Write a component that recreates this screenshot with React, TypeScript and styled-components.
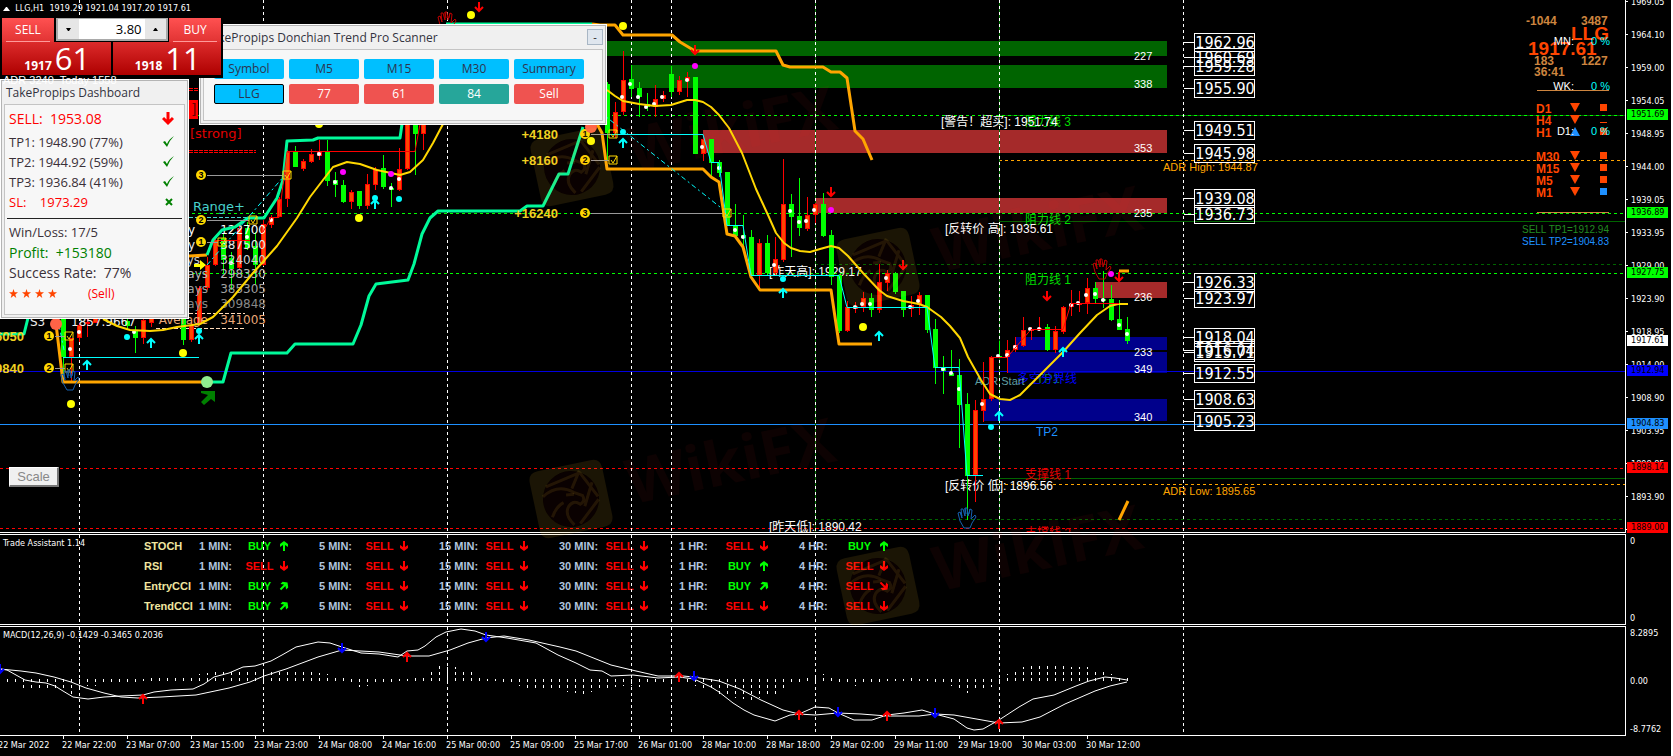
import React from "react";
import styled, { createGlobalStyle, css } from "styled-components";

const FONT_AXIS = `"DejaVu Sans Condensed", "DejaVu Sans", sans-serif`;
const FONT_ARIAL = `"Liberation Sans", "Noto Sans CJK SC", sans-serif`;
const FONT_WIDE = `"DejaVu Sans", sans-serif`;
const FONT_UI = `"Open Sans", "Noto Sans", sans-serif`;

const LIME = "#00ff00";
const DARK_GREEN = "#006400";
const RED = "#ff0000";
const ORANGE = "#ffa500";
const GOLD = "#ffd700";
const MINT = "#00fa9a";
const AQUA = "#00ffff";
const ORANGE_RED = "#ff4500";
const DODGER = "#1e90ff";
const PERU = "#cd853f";

const GlobalStyle = createGlobalStyle`
  * { box-sizing: border-box; }
  body { margin: 0; background: #000; overflow: hidden; }
  button, input { font: inherit; margin: 0; padding: 0; }
`;

/* ---------- frame ---------- */

const Terminal = styled.main`
  position: relative;
  display: flex;
  flex-direction: column;
  gap: 1px;
  min-height: 100vh;
  overflow: hidden;
  background: #000;
  color: #fff;
  border-right: 2px solid #fff;
  font-family: ${FONT_AXIS};
  font-size: 9px;
`;

const Pane = styled.section<{ $height: number }>`
  display: flex;
  height: ${(p) => p.$height}px;
`;

const Plot = styled.div<{ $first?: boolean }>`
  position: relative;
  flex: 1;
  min-width: 0;
  overflow: hidden;
  border: solid #fff;
  border-width: ${(p) => (p.$first ? "0 1px 1px 0" : "1px 1px 1px 0")};
`;

const Canvas = styled.svg`
  position: absolute;
  inset: 0;
  display: block;
  width: 100%;
  height: 100%;
`;

const PaneTitle = styled.h2`
  position: absolute;
  top: 2px;
  left: 3px;
  margin: 0;
  font-size: 9px;
  font-weight: 400;
  line-height: 13px;
  white-space: pre;
`;

/* ---------- value axis ---------- */

const Axis = styled.div<{ $spread?: boolean }>`
  position: relative;
  width: 45px;
  flex: none;
  overflow: hidden;
  display: flex;
  flex-direction: column;
  justify-content: ${(p) => (p.$spread ? "space-between" : "flex-start")};
  line-height: 14px;
`;

const ScaleList = styled.ul`
  list-style: none;
  margin: -15px 0 0;
  padding: 0;
`;

const ScaleItem = styled.li`
  display: flex;
  align-items: center;
  gap: 3px;
  height: 33px;
  &::before {
    content: "";
    width: 2px;
    height: 1px;
    background: #fff;
  }
`;

const AxisValue = styled.span`
  padding-left: 4px;
`;

const PriceTag = styled.span<{ $y: number; $bg: string }>`
  position: absolute;
  left: 1px;
  top: ${(p) => p.$y - 5}px;
  width: 41px;
  height: 11px;
  padding-left: 4px;
  line-height: 11px;
  background: ${(p) => p.$bg};
  color: #000;
`;

const TimeAxis = styled.ol`
  list-style: none;
  display: flex;
  margin: -1px 0 0 -2px;
  padding: 0;
  height: 20px;
`;

const TimeItem = styled.li`
  flex: none;
  width: 64px;
  line-height: 12px;
  white-space: nowrap;
  &::before {
    content: "";
    display: block;
    width: 1px;
    height: 3px;
    margin-left: 1px;
    background: #fff;
  }
`;

/* ---------- drawing text ---------- */

const Label = styled.text<{ $size?: number; $bold?: boolean; $font?: string }>`
  font-family: ${(p) => p.$font || FONT_ARIAL};
  font-size: ${(p) => p.$size || 12}px;
  font-weight: ${(p) => (p.$bold ? 700 : 400)};
  white-space: pre;
`;

/* ---------- one-click trading ---------- */

const TradePanel = styled.form`
  position: absolute;
  top: 18px;
  left: 0;
  width: 223px;
  padding: 0 2px 3px;
  background: #000;
  font-family: ${FONT_UI};
  color: #fff;
`;

const TradeTop = styled.div`
  display: flex;
  justify-content: space-between;
  height: 24px;
`;

const SideButton = styled.button`
  width: 52px;
  height: 24px;
  border: 0;
  padding: 0 4px;
  background: linear-gradient(#ff5151, #e13333);
  color: #fff;
  font-size: 12px;
  line-height: 22px;
  span {
    display: block;
    border-bottom: 1px solid #ff9a9a;
  }
`;

const Volume = styled.div`
  display: flex;
  width: 112px;
  height: 23px;
  border: 2px solid #a9a9a9;
  border-top-width: 1px;
  background: #fff;
  input {
    flex: 1;
    min-width: 0;
    border: 0;
    padding-right: 3px;
    text-align: right;
    font-size: 13px;
    color: #000;
    outline: 0;
  }
  button {
    width: 21px;
    border: 0;
    background: #e6e6e6;
    display: flex;
    align-items: center;
    justify-content: center;
  }
`;

const Quotes = styled.div`
  display: flex;
  gap: 2px;
`;

const Quote = styled.div`
  flex: 1;
  height: 33px;
  display: flex;
  justify-content: center;
  align-items: baseline;
  gap: 3px;
  padding-left: 2px;
  line-height: 32px;
  background: linear-gradient(#dc2b2b, #ae0000);
  b {
    font-size: 12px;
  }
  span {
    font-size: 31px;
  }
`;

/* ---------- floating windows ---------- */

const windowSkin = css`
  position: absolute;
  padding: 0 3px 3px;
  background: #f0f0f0;
  border: 1px solid #fff;
  outline: 1px solid #b4b4b4;
  outline-offset: -2px;
  color: #33333f;
  font-family: ${FONT_UI};
`;

const Dashboard = styled.aside`
  ${windowSkin};
  top: 79px;
  left: 0;
  width: 189px;
`;

const Scanner = styled.aside`
  ${windowSkin};
  top: 24px;
  left: 199px;
  width: 408px;
`;

const WindowTitle = styled.header`
  display: flex;
  justify-content: space-between;
  align-items: center;
  height: 24px;
  padding-left: 2px;
  h2 {
    margin: 0;
    font-size: 12px;
    font-weight: 400;
  }
`;

const Minimize = styled.button`
  width: 16px;
  height: 16px;
  border: 1px solid #a8b6c4;
  background: #dfe6ee;
  color: #222;
  font-size: 11px;
  line-height: 12px;
`;

const WindowBody = styled.div`
  background: #f7f7f7;
  border: 1px solid #c4c4c4;
`;

const ScanGrid = styled.div`
  display: grid;
  grid-template-columns: repeat(5, 70px);
  grid-auto-rows: 20px;
  gap: 5px;
  padding: 9px 10px 16px;
`;

const Cell = styled.button<{ $bg: string; $current?: boolean }>`
  border: ${(p) => (p.$current ? "1px solid #000" : "0")};
  border-radius: 2px;
  background: ${(p) => p.$bg};
  color: ${(p) => (p.$bg === "#00bfff" ? "#2c3550" : "#fff")};
  font-size: 12px;
  line-height: 18px;
`;

const DashBody = styled(WindowBody)`
  padding: 0 2px 10px;
`;

const DashRow = styled.div<{ $size?: number; $color?: string; $height?: number }>`
  display: flex;
  align-items: center;
  justify-content: space-between;
  height: ${(p) => p.$height || 20}px;
  padding: 0 8px 0 2px;
  font-size: ${(p) => p.$size || 13}px;
  color: ${(p) => p.$color || "#3a3038"};
  white-space: pre;
`;

const Divider = styled.hr`
  height: 1px;
  margin: 6px 0 3px;
  border: 0;
  background: #222;
`;

const Rating = styled.div`
  display: flex;
  align-items: center;
  gap: 31px;
  height: 22px;
  padding-left: 2px;
  font-size: 12px;
  color: ${RED};
`;

const Stars = styled.span`
  display: flex;
  gap: 4px;
`;

const ScaleButton = styled.button`
  position: absolute;
  top: 467px;
  left: 9px;
  width: 50px;
  height: 20px;
  border: solid;
  border-width: 1px 2px 2px 1px;
  border-color: #fff #777 #777 #fff;
  background: #f0f0f0;
  color: #888;
  font-family: ${FONT_ARIAL};
  font-size: 13px;
  line-height: 16px;
`;

/* ---------- trend summary at the right ---------- */

const Corner = styled.svg`
  position: absolute;
  top: 0;
  right: 14px;
  width: 90px;
  height: 250px;
`;

/* ---------- assistant ---------- */

const SignalTable = styled.table`
  position: relative;
  margin: 1px 0 0 144px;
  border-collapse: collapse;
  table-layout: fixed;
  width: 775px;
  font-family: ${FONT_ARIAL};
  font-size: 11px;
  font-weight: 700;
  text-align: left;
  white-space: nowrap;
  tr {
    height: 20px;
  }
  th,
  td {
    padding: 0;
  }
`;

const NameHead = styled.th`
  width: 55px;
  color: #f0e6a0;
`;

const Frame = styled.td`
  width: 46px;
  color: #b0c4de;
`;

const Signal = styled.td<{ $buy: boolean }>`
  width: 74px;
  color: ${(p) => (p.$buy ? LIME : RED)};
  span {
    display: flex;
    align-items: center;
    gap: 4px;
  }
  em {
    flex: none;
    width: 29px;
    font-style: normal;
    text-align: center;
  }
`;

const Watermark = styled.svg`
  position: absolute;
  top: 0;
  left: 0;
  width: 100%;
  height: 100%;
  pointer-events: none;
`;

/* ---------- data ---------- */

const DAY_LINES = [79, 263, 447, 631, 671, 815, 999, 1183];

type Candle = [number, number, number, number, number, 0 | 1];
// x, high, body top, body bottom, low, rising colour flag
const CANDLES: Candle[] = [
  [63, 318, 318, 357, 380, 1], [71, 338, 338, 357, 381, 0], [79, 323, 325, 338, 342, 0], [87, 318, 322, 324, 337, 0],
  [95, 316, 317, 323, 323, 0], [127, 318, 321, 326, 330, 1], [135, 326, 330, 338, 353, 1], [143, 318, 320, 338, 344, 0],
  [151, 316, 318, 323, 327, 0], [183, 318, 318, 340, 345, 1], [191, 320, 325, 340, 342, 0], [199, 286, 288, 323, 326, 0],
  [207, 257, 265, 288, 290, 0], [215, 238, 240, 265, 266, 0], [223, 233, 238, 260, 273, 1], [231, 252, 258, 269, 290, 1],
  [239, 226, 228, 268, 270, 0], [247, 222, 228, 248, 250, 1], [255, 232, 246, 265, 285, 1], [263, 220, 224, 265, 266, 0],
  [271, 215, 217, 225, 228, 0], [279, 197, 199, 217, 217, 0], [287, 150, 152, 199, 207, 0], [295, 146, 152, 167, 167, 1],
  [303, 159, 161, 169, 171, 0], [311, 149, 154, 162, 163, 0], [319, 140, 152, 156, 160, 0], [327, 140, 152, 181, 186, 1],
  [335, 172, 180, 185, 197, 1], [343, 180, 185, 202, 203, 1], [351, 190, 192, 202, 209, 0], [359, 191, 191, 206, 209, 1],
  [367, 174, 184, 206, 209, 0], [375, 167, 169, 185, 190, 0], [383, 155, 168, 187, 189, 1], [391, 183, 188, 190, 207, 1],
  [399, 148, 169, 190, 191, 0], [407, 110, 110, 169, 170, 0], [415, 110, 110, 134, 175, 1], [423, 110, 110, 134, 150, 0],
  [607, 82, 84, 133, 160, 1], [615, 102, 112, 133, 138, 0], [623, 51, 80, 112, 115, 0], [631, 65, 79, 89, 97, 1],
  [639, 82, 88, 97, 117, 1], [647, 93, 104, 107, 111, 1], [655, 85, 99, 107, 117, 0], [663, 91, 95, 99, 102, 0],
  [671, 66, 74, 92, 97, 1], [679, 76, 80, 92, 95, 0], [687, 72, 77, 81, 97, 0], [695, 77, 77, 154, 154, 1],
  [703, 137, 139, 154, 161, 0], [711, 139, 139, 163, 176, 1], [719, 160, 162, 173, 177, 1], [727, 172, 172, 225, 225, 1],
  [735, 204, 225, 236, 238, 1], [743, 215, 235, 238, 248, 1], [751, 230, 237, 276, 276, 1], [759, 239, 243, 275, 288, 0],
  [767, 235, 243, 273, 275, 1], [775, 237, 259, 273, 275, 0], [783, 159, 204, 260, 262, 0], [791, 194, 204, 217, 257, 1],
  [799, 178, 216, 228, 236, 1], [807, 197, 215, 229, 231, 0], [815, 203, 204, 215, 223, 0], [823, 193, 204, 236, 237, 1],
  [831, 230, 235, 277, 285, 1], [839, 274, 275, 331, 333, 1], [847, 301, 307, 331, 332, 0], [855, 302, 306, 309, 313, 0],
  [863, 292, 298, 307, 312, 0], [871, 293, 298, 310, 317, 1], [879, 264, 282, 310, 313, 0], [887, 270, 273, 283, 291, 0],
  [895, 272, 273, 292, 294, 1], [903, 291, 291, 310, 317, 1], [911, 296, 305, 309, 317, 0], [919, 292, 295, 305, 315, 0],
  [927, 295, 295, 330, 333, 1], [935, 319, 329, 368, 384, 1], [943, 356, 368, 371, 394, 1], [951, 350, 373, 376, 376, 1],
  [959, 359, 375, 405, 448, 1], [967, 393, 404, 476, 520, 1], [975, 400, 410, 475, 502, 0], [983, 362, 399, 411, 422, 0],
  [991, 356, 357, 399, 401, 0], [999, 341, 356, 358, 358, 1], [1007, 340, 350, 357, 373, 0], [1015, 337, 345, 350, 352, 0],
  [1023, 317, 330, 346, 347, 0], [1031, 327, 329, 331, 340, 0], [1039, 317, 328, 330, 331, 0], [1047, 324, 327, 350, 351, 1],
  [1055, 326, 331, 350, 353, 0], [1063, 306, 307, 332, 334, 0], [1071, 290, 304, 307, 316, 0], [1079, 291, 303, 305, 312, 0],
  [1087, 278, 288, 303, 314, 0], [1095, 282, 288, 299, 303, 1], [1103, 271, 299, 301, 308, 1], [1111, 285, 299, 320, 321, 1],
  [1119, 300, 319, 330, 330, 1], [1127, 317, 329, 341, 344, 1],
];

const PIVOTS: [number, number][] = [
  [622, 97], [630, 84], [638, 97], [646, 107], [654, 104], [662, 97], [687, 80], [702, 147], [719, 168], [735, 230],
  [743, 237], [774, 265], [790, 211], [799, 222], [806, 221], [814, 210], [855, 307], [862, 304], [870, 304], [886, 278],
  [910, 307], [918, 301], [1071, 305], [1078, 303], [1086, 295], [1095, 294], [1103, 300], [1119, 325], [1127, 334],
  [1030, 329], [1039, 329], [1015, 347], [1007, 355], [998, 356], [943, 369], [951, 373], [959, 389], [982, 404],
  [319, 154], [335, 182], [391, 188], [399, 179], [271, 220], [247, 237], [231, 263], [79, 332], [70, 349], [134, 332],
];

const ZONES: [number, number, number, string][] = [
  [600, 41, 15, DARK_GREEN], [631, 65, 23, DARK_GREEN], [703, 130, 23, "#a52a2a"], [815, 198, 15, "#a52a2a"],
  [1095, 282, 16, "#a52a2a"], [1015, 337, 13, "#00008b"], [1007, 352, 21, "#00008b"], [983, 399, 22, "#00008b"],
];

const ZONE_LABELS: [string, number][] = [
  ["227", 56], ["338", 84], ["353", 148], ["235", 213], ["236", 297], ["233", 352], ["349", 369], ["340", 417],
];

const LEVELS: [number, string, boolean, number][] = [
  // y, colour, dashed, start x
  [221, DARK_GREEN, false, 999], [264, DARK_GREEN, true, 815], [478, DARK_GREEN, false, 999], [519, DARK_GREEN, true, 815],
  [115, DARK_GREEN, false, 999], [115, LIME, true, 0], [213, LIME, true, 0], [273, LIME, true, 0],
  [160, ORANGE, true, 999], [484, ORANGE, true, 999], [371, "#0000e0", false, 0], [424, DODGER, false, 0],
  [468, RED, true, 0], [528, RED, true, 0],
];

const BOXED: [string, number][] = [
  ["1962.96", 42], ["1960.69", 57], ["1959.28", 66], ["1955.90", 88], ["1949.51", 130], ["1945.98", 153],
  ["1939.08", 198], ["1936.73", 214], ["1926.33", 282], ["1923.97", 298], ["1918.04", 337], ["1916.04", 350],
  ["1915.71", 352], ["1912.55", 373], ["1908.63", 399], ["1905.23", 421],
];

const NOTES: [string, number, number, string, number][] = [
  ["阻力线 3", 1025, 122, "#00dc00", 12], ["阻力线 2", 1025, 220, "#00dc00", 12], ["阻力线 1", 1025, 280, "#00dc00", 12],
  ["TP1", 1036, 379, "#0a7a50", 13], ["多空分界线", 1017, 379, "#0000ff", 12], ["TP2", 1036, 432, DODGER, 12],
  ["支撑线 1", 1025, 475, "#e00000", 12], ["支撑线 2", 1025, 533, "#e00000", 12],
  ["[警告！超买]: 1951.74", 941, 122, "#fff", 12], ["[反转价 高]: 1935.61", 945, 229, "#fff", 12],
  ["[昨天高]: 1929.17", 769, 272, "#fff", 12], ["[昨天低]: 1890.42", 769, 527, "#fff", 12],
  ["[反转价 低]: 1896.56", 945, 486, "#fff", 12], ["ADR Start", 975, 381, "#5f9ea0", 11],
  ["ADR High: 1944.87", 1163, 167, ORANGE, 11], ["ADR Low: 1895.65", 1163, 491, ORANGE, 11],
];

const PIPS: [string, number, number][] = [
  ["+4180", 558, 134], ["+8160", 558, 160], ["+16240", 558, 213], ["+6050", 24, 336], ["+9840", 24, 368],
];

const TARGETS: [number, number, number, number][] = [
  // badge digit, badge x, y, box x
  [3, 201, 175, 287], [2, 201, 220, 253], [1, 201, 242, 222], [1, 49, 336, 69], [2, 49, 368, 69],
  [1, 585, 134, 613], [2, 585, 160, 613], [3, 585, 213, 727],
];

const RANGES: [string, number, string, number, string][] = [
  ["Today", 195, "122700", 229, "#ffffff"], ["Yesterday", 195, "387500", 244, "#e8e8e8"],
  ["5 Days", 200, "324040", 259, "#d0d0d0"], ["10 Days", 208, "298330", 273, "#b8b8b8"],
  ["20 Days", 208, "385305", 288, "#a0a0a0"], ["50 Days", 208, "309848", 303, "#888888"],
  ["Average", 208, "341005", 319, "#e9a878"],
];

const DOTS: [number, number, number, string][] = [
  [623, 26, 4, "#ffff00"], [863, 327, 4, "#ffff00"], [471, 15, 4, "#ffff00"], [319, 124, 4, "#ffff00"],
  [359, 218, 4, "#ffff00"], [71, 404, 4, "#ffff00"], [183, 353, 4, "#ffff00"],
  [695, 66, 3, "#ff00ff"], [831, 210, 3, "#ff00ff"], [1111, 274, 3, "#ff00ff"], [343, 172, 3, "#ff00ff"], [391, 174, 3, "#ff00ff"],
  [623, 132, 3, AQUA], [783, 279, 3, AQUA], [991, 427, 3, AQUA], [127, 337, 3, AQUA], [199, 331, 3, AQUA],
  [399, 199, 3, AQUA], [375, 198, 3, AQUA], [591, 127, 6, "#ff6347"], [56, 324, 6, "#ff6347"], [207, 382, 6, "#90ee90"],
  [591, 141, 4, "#ffff00"],
];

const UP_ARROWS: [number, number][] = [
  [623, 143], [783, 293], [879, 336], [999, 416], [151, 343], [87, 365], [199, 339], [375, 204], [1063, 352],
];
const DOWN_ARROWS: [number, number][] = [
  [479, 7], [695, 50], [831, 192], [903, 265], [1047, 296], [1119, 277],
];

const AXIS_PRICES = [
  "1969.05", "1964.10", "1959.00", "1954.05", "1948.95", "1944.00", "1939.05", "1933.95", "1929.00",
  "1923.90", "1918.95", "1914.00", "1908.90", "1903.95", "1898.85", "1893.90", "1888.95",
];
const TAGS: [string, number, string][] = [
  ["1951.69", 114, LIME], ["1936.89", 212, LIME], ["1927.75", 272, LIME], ["1917.61", 340, "#fff"],
  ["1912.94", 370, "#0000ff"], ["1904.83", 423, DODGER], ["1898.14", 467, RED], ["1889.00", 527, RED],
];
const TIMES = [
  "22 Mar 2022", "22 Mar 22:00", "23 Mar 07:00", "23 Mar 15:00", "23 Mar 23:00", "24 Mar 08:00", "24 Mar 16:00",
  "25 Mar 00:00", "25 Mar 09:00", "25 Mar 17:00", "26 Mar 01:00", "28 Mar 10:00", "28 Mar 18:00", "29 Mar 02:00",
  "29 Mar 11:00", "29 Mar 19:00", "30 Mar 03:00", "30 Mar 12:00",
];

const FRAMES = ["1 MIN:", "5 MIN:", "15 MIN:", "30 MIN:", "1 HR:", "4 HR:"];
// B / S = buy / sell; the second letter is the arrow heading
const SIGNALS: [string, string[]][] = [
  ["STOCH", ["Bn", "Ss", "Ss", "Ss", "Ss", "Bn"]],
  ["RSI", ["Ss", "Ss", "Ss", "Ss", "Bn", "Ss"]],
  ["EntryCCI", ["Be", "Ss", "Ss", "Ss", "Be", "Sd"]],
  ["TrendCCI", ["Be", "Ss", "Ss", "Ss", "Ss", "Ss"]],
];
const HEADING: Record<string, number> = { n: 0, e: 45, d: 135, s: 180 };

const MACD_FAST =
  "0,42 7,43 16,48 25,53 36,55 46,56 55,59 63,64 73,70 88,72 104,70 121,69 143,68 154,65 171,63 193,62 204,57 214,50 229,46 243,40 255,39 271,34 282,28 296,20 318,15 330,16 342,20 361,26 379,27 398,30 407,24 418,23 425,19 436,10 446,5 461,2 475,4 486,8 507,11 536,16 558,28 576,36 590,43 602,44 611,49 633,48 658,51 679,50 694,52 711,60 719,65 733,76 744,83 754,88 775,94 790,88 799,87 815,80 829,81 838,86 854,93 872,93 887,88 904,86 922,83 935,87 954,92 967,101 974,103 983,102 999,93 1019,80 1033,72 1054,68 1076,59 1089,54 1105,50 1115,51 1127,53";
const MACD_SLOW =
  "0,42 21,44 36,46 54,50 71,55 86,61 104,66 121,70 138,71 161,70 196,68 229,61 250,55 264,49 286,42 318,30 342,23 379,25 407,29 429,29 450,23 468,16 486,11 504,9 529,13 560,20 576,24 611,38 636,44 658,49 683,49 694,50 719,54 740,62 761,73 783,83 799,87 815,88 838,86 861,87 887,89 919,89 935,87 954,88 999,96 1022,95 1040,90 1065,77 1095,64 1110,59 1127,55";
const HISTOGRAM: [number, number][] = [
  [7, -1], [24, -7], [56, -8], [72, -13], [80, -5], [95, -5], [110, -1], [140, -1], [150, 2], [190, 3], [204, 7],
  [220, 9], [250, 9], [285, 10], [310, 9], [330, 5], [345, 1], [360, -6], [375, -3], [405, 1], [425, 4], [438, 14],
  [455, 13], [470, 8], [487, 1], [510, -3], [525, -7], [555, -8], [583, -14], [600, -8], [623, -5], [640, -6],
  [663, -1], [690, -4], [730, -16], [750, -19], [775, -13], [790, -4], [810, 3], [823, 6], [840, -1], [855, -5],
  [880, -1], [910, 2], [935, -1], [955, -6], [967, -12], [985, -8], [1000, -2], [1007, 6], [1025, 14], [1040, 14],
  [1088, 13], [1103, 8], [1111, 6], [1127, 2],
];

const histogramBars = Array.from({ length: 141 }, (_, i) => {
  const x = 7 + i * 8;
  let k = 0;
  while (k < HISTOGRAM.length - 2 && HISTOGRAM[k + 1][0] < x) k++;
  const [x0, a] = HISTOGRAM[k];
  const [x1, b] = HISTOGRAM[k + 1];
  return [x, Math.round(a + ((b - a) * (x - x0)) / (x1 - x0))];
});

/* ---------- small drawings ---------- */

function Arrow({ x, y, color, turn = 0 }: { x: number; y: number; color: string; turn?: number }) {
  return (
    <path
      d="M0,-3 V5 M-4,0 L0,-4 L4,0"
      transform={`translate(${x} ${y}) rotate(${turn})`}
      fill="none"
      stroke={color}
      strokeWidth="2"
    />
  );
}

function SignalArrow({ color, turn }: { color: string; turn: number }) {
  return (
    <path
      d="M-1,5 V-1 L-4,1 V-2 L0,-5 L4,-2 V1 L1,-1 V5 Z"
      transform={`rotate(${turn})`}
      fill={color}
    />
  );
}

function MacdArrow({ x, y, color, turn = 0 }: { x: number; y: number; color: string; turn?: number }) {
  return (
    <path
      d="M0,5 V-4 M-4,0 L0,-4 L4,0"
      transform={`translate(${x} ${y}) rotate(${turn})`}
      fill="none"
      stroke={color}
      strokeWidth="2"
    />
  );
}

function Hand({ x, y, color }: { x: number; y: number; color: string }) {
  return (
    <path
      transform={`translate(${x} ${y})`}
      d="M-3,10 L-7,3 L-9,-5 L-7,-6 L-5,0 L-6,-9 L-4,-9 L-2,-2 L-2,-10 L0,-10 L1,-2 L3,-9 L5,-8 L4,1 L8,-3 L9,-1 L5,5 L3,10 Z M-7,-6 L-5,-2 M-2,-10 L-1,-4 M3,-9 L2,-4"
      fill="none"
      stroke={color}
      strokeWidth="1"
    />
  );
}

function DayLines() {
  return (
    <g stroke="#fff" strokeDasharray="3 3" shapeRendering="crispEdges">
      {DAY_LINES.map((x) => (
        <line key={x} x1={x + 0.5} x2={x + 0.5} y1="0" y2="100%" />
      ))}
    </g>
  );
}

function WikiMark({ x, y }: { x: number; y: number }) {
  return (
    <g transform={`translate(${x} ${y}) rotate(-12)`}>
      <path
        fillRule="evenodd"
        d="M-27,-34 H27 Q37,-34 37,-24 V24 Q37,34 27,34 H-27 Q-37,34 -37,24 V-24 Q-37,-34 -27,-34 Z M0,-28 A28,28 0 1 0 0,28 A28,28 0 1 0 0,-28 Z"
        fill="#f5c030"
        fillOpacity="0.11"
      />
      <circle r="28" fill="#ff2020" fillOpacity="0.04" />
      <g fill="none" stroke="#f5c030" strokeOpacity="0.11" strokeWidth="3">
        <path d="M-22,-17 L14,-24 M14,-26 L3,-10 M14,-24 L27,3 M24,-12 L12,10 M27,6 L4,26" />
        <path d="M-27,-8 Q-10,-18 4,-6 L12,-1 Q14,5 8,7 Q2,1 -4,7 Q-10,14 -2,26" />
        <path d="M-22,14 Q-16,4 -8,2 M-4,-5 L4,-4" />
      </g>
      <Label x="58" y="18" $font={FONT_UI} $size={62} $bold fill="#ff2020" fillOpacity="0.05">
        WikiFX
      </Label>
    </g>
  );
}

function PriceChart() {
  return (
    <Canvas role="img" aria-label="LLG H1 price chart">
      {ZONES.map(([x, y, h, c]) => (
        <rect key={y} x={x} y={y} width={1167 - x} height={h} fill={c} />
      ))}
      <g shapeRendering="crispEdges">
        {LEVELS.map(([y, c, dashed, x], i) => (
          <line key={i} x1={x} x2="100%" y1={y + 0.5} y2={y + 0.5} stroke={c} strokeDasharray={dashed ? "3 3" : undefined} />
        ))}
        <path d="M815.5,0 V532 M999.5,0 V532" stroke="#007000" />
      </g>
      <DayLines />

      {ZONE_LABELS.map(([t, y]) => (
        <Label key={t} x="1134" y={y + 4} $size={11} fill="#fff">{t}</Label>
      ))}
      {NOTES.map(([t, x, y, c, s]) => (
        <Label key={t} x={x} y={y + 4} $size={s} fill={c}>{t}</Label>
      ))}

      <g shapeRendering="crispEdges">
        <path d="M189,88.5 H199 M189,90.5 H199 M189,150.5 H256 M189,152.5 H256" stroke={RED} strokeDasharray="4 1" />
        <rect x="189" y="100" width="9" height="19" fill={RED} />
        <path d="M189,217.5 H247" stroke="#48d1cc" strokeDasharray="4 2" />
        <path d="M189,313.5 H245 M156,328.5 H245" stroke="#ffdab9" strokeDasharray="4 2" />
      </g>
      <Label x="191" y="114" $size={14} $font={FONT_WIDE} fill="#600">]</Label>
      <Label x="190" y="138" $size={13} $font={FONT_WIDE} fill="#e00000">[strong]</Label>
      <Label x="245" y="211" $size={13} $font={FONT_WIDE} fill="#48d1cc" textAnchor="end">Daily Range+</Label>

      <g shapeRendering="crispEdges">
        {CANDLES.map(([x, hi, top, bottom, lo, up]) => (
          <g key={x} fill={up ? LIME : ORANGE_RED} stroke={up ? LIME : RED}>
            <line x1={x + 0.5} x2={x + 0.5} y1={hi} y2={lo} />
            <rect x={x - 1.5} y={top + 0.5} width="4" height={Math.max(bottom - top - 1, 1)} />
          </g>
        ))}
      </g>
      {PIVOTS.map(([x, y]) => (
        <circle key={`${x}-${y}`} cx={x} cy={y} r="2" fill="#fff" />
      ))}
      {RANGES.map(([name, right, value, y, c]) => (
        <g key={value} fill={c}>
          <Label x={right} y={y + 5} $font={FONT_WIDE} textAnchor="end">{name}</Label>
          <Label x="266" y={y + 5} $font={FONT_WIDE} textAnchor="end">{value}</Label>
        </g>
      ))}
      <Label x="30" y="326" $font={FONT_WIDE} fill="#eee">S3</Label>
      <Label x="71" y="326" $font={FONT_WIDE} fill="#eee">1857.9667</Label>

      <g fill="none" strokeLinejoin="round">
        <polyline stroke={GOLD} strokeWidth="2" points="103,319 117,326 130,330 150,331 163,330 177,327 200,324 213,317 233,297 253,273 277,246 297,218 310,197 323,180 333,167 347,162 360,164 377,170 400,175 410,172 423,160 433,143 443,124" />
        <polyline stroke={GOLD} strokeWidth="2" points="607,90 615,96 623,101 639,104 655,106 671,105 687,100 695,100 703,102 711,107 719,115 729,128 742,153 756,189 768,215 776,233 784,243 791,248 800,251 810,252 820,249 831,246 839,248 848,256 863,273 879,290 887,296 903,301 919,304 927,307 941,317 950,326 960,338 968,357 981,380 990,394 1000,399 1010,400 1020,395 1030,385 1047,368 1063,352 1080,333 1097,315 1110,306 1118,304 1128,304" />
        <g stroke={ORANGE} strokeWidth="3">
          <polyline points="592,24 600,25 615,25 623,35 672,35 680,42 695,51 776,51 783,65 790,67 823,67 831,72 840,72 847,78 855,131 863,139 872,160" />
          <polyline points="597,124 602,133 607,169 703,169 711,177 719,182 727,234 735,236 743,247 751,277 760,290 831,290 839,344 872,344" />
          <polyline points="56,324 63,382 207,382" />
          <polyline points="189,256 207,255" />
          <path d="M1119,520 L1128,501 M1119,271 H1129" />
        </g>
        <g stroke={MINT} strokeWidth="3">
          <polyline points="0,334 24,334 28,318" />
          <polyline points="207,382 223,382 231,353 287,353 295,344 353,344 361,325 369,296 376,284 408,280 414,264 422,234 430,218 438,211 520,211 527,206 543,206 559,174 568,174 583,127" />
          <polyline points="207,255 213,240 222,230 235,227 248,218 264,218 277,198 283,180 287,141 313,140 318,138 400,138 402,124" />
          <path d="M446,24 H592" />
        </g>
        <g stroke={AQUA} strokeWidth="1">
          <polyline points="600,134.5 703,134.5 711,162.5 719,162.5 727,225.5 743,225.5 751,275.5 839,275.5 847,307.5 927,307.5 935,367.5 959,367.5 967,475.5 983,475.5" />
          <path d="M63,357.5 H199" />
          <path d="M600,112 L720,207 M207,265 L285,175 M58,320 L64,350" strokeDasharray="5 3 2 3" />
        </g>
        <g stroke={RED}>
          <polyline points="991,357.5 1007,357.5 1031,329.5 1063,329.5 1071,303.5 1119,303.5" />
          <path d="M215,240.5 H250 M263,232 L271,217.5 H279 L287,151.5 H415 L420,124" />
        </g>
      </g>

      {TARGETS.map(([n, x, y, bx]) => (
        <g key={`${x}-${y}`}>
          <line x1={x + 6} x2={bx - 4} y1={y + 0.5} y2={y + 0.5} stroke="#999" />
          <circle cx={x} cy={y} r="5" fill={GOLD} />
          <Label x={x} y={y + 3} $size={9} $bold textAnchor="middle" fill="#000">{n}</Label>
          <path d={`M${bx - 4},${y - 4} h8 v8 h-8 z M${bx - 2},${y} l2,3 l4,-7`} fill="none" stroke={GOLD} />
        </g>
      ))}
      {PIPS.map(([t, x, y]) => (
        <Label key={t} x={x} y={y + 5} $size={13} $bold textAnchor="end" fill="#f0d020">{t}</Label>
      ))}

      {DOTS.map(([x, y, r, c]) => (
        <circle key={`${x}-${y}`} cx={x} cy={y} r={r} fill={c} />
      ))}
      {UP_ARROWS.map(([x, y]) => (
        <Arrow key={`${x}-${y}`} x={x} y={y} color={AQUA} />
      ))}
      {DOWN_ARROWS.map(([x, y]) => (
        <Arrow key={`${x}-${y}`} x={x} y={y} color={RED} turn={180} />
      ))}
      <path d="M194,264 H200 V260 L206,265 L200,270 V267 H194 Z" fill="#ffff00" />
      <path d="M201,393 V391 H215 V402 L211,399 L204,405 L201,402 L208,395 Z" fill="#008000" />
      <Hand x={1102} y={269} color="#c00000" />
      <Hand x={967} y={518} color="#1560b0" />
      <Hand x={70} y={380} color="#1560b0" />
      <Hand x={447} y={22} color="#c00000" />

      {BOXED.map(([t, y]) => (
        <g key={t}>
          <path d={`M1184,${y + 0.5} H1194 M1194.5,${y - 8.5} h60 v18 h-60 z`} fill="none" stroke="#fff" shapeRendering="crispEdges" />
          <Label x="1225" y={y + 6} $font={FONT_AXIS} $size={16} textAnchor="middle" fill="#fff">{t}</Label>
        </g>
      ))}
    </Canvas>
  );
}

const TRENDS: [string, number, boolean, string][] = [
  // frame, y, falling, square colour
  ["D1", 108, true, ORANGE_RED], ["H4", 120, true, "none"], ["H1", 132, false, ORANGE_RED], ["M30", 156, true, ORANGE_RED],
  ["M15", 168, true, ORANGE_RED], ["M5", 180, true, ORANGE_RED], ["M1", 192, true, DODGER],
];

function CornerInfo() {
  return (
    <Corner viewBox="0 0 90 250" role="img" aria-label="Trend summary">
      <g fill={PERU}>
        <Label x="5" y="25" $bold $size={12}>-1044</Label>
        <Label x="60" y="25" $bold $size={12}>3487</Label>
        <Label x="13" y="65" $bold $size={12}>183</Label>
        <Label x="60" y="65" $bold $size={12}>1227</Label>
        <Label x="13" y="76" $bold $size={12}>36:41</Label>
        <rect x="16" y="90" width="72" height="1" />
        <rect x="16" y="212" width="72" height="1" />
      </g>
      <g fill={ORANGE_RED}>
        <Label x="50" y="40" $bold $size={19}>LLG</Label>
        <Label x="7" y="55" $bold $size={19}>1917.61</Label>
      </g>
      {TRENDS.map(([name, y, falling, square]) => (
        <g key={name}>
          <Label x="15" y={y + 5} $bold $size={12} fill={ORANGE_RED}>{name}</Label>
          <path
            d={falling ? `M49,${y - 5} h10 l-5,9 z` : `M49,${y + 4} h10 l-5,-9 z`}
            fill={falling ? ORANGE_RED : DODGER}
          />
          {square === "none" ? (
            <rect x="79" y={y + 2} width="7" height="1" fill={ORANGE_RED} />
          ) : (
            <rect x="79" y={y - 4} width="7" height="7" fill={square} />
          )}
        </g>
      ))}
      {([["MN:", 45], ["WK:", 90], ["D1:", 135]] as [string, number][]).map(([t, y]) => (
        <g key={t}>
          <Label x="53" y={y} textAnchor="end" $size={11} fill="#fff">{t}</Label>
          <Label x="89" y={y} textAnchor="end" $size={11} fill={AQUA}>0 %</Label>
        </g>
      ))}
      <Label x="88" y="233" textAnchor="end" $size={10} fill="#228b22">SELL TP1=1912.94</Label>
      <Label x="88" y="245" textAnchor="end" $size={10} fill={DODGER}>SELL TP2=1904.83</Label>
    </Corner>
  );
}

function Check() {
  return (
    <svg width="11" height="12" viewBox="0 0 11 12" aria-label="hit">
      <path d="M0,6 L2,5 L4,8 Q6,3 11,0 Q6,5 4,11 Z" fill="#008000" />
    </svg>
  );
}

function Star() {
  return (
    <svg width="9" height="9" viewBox="0 0 10 10" aria-hidden="true">
      <path d="M5,0 L6.2,3.7 H10 L7,6 L8.1,10 L5,7.6 L1.9,10 L3,6 L0,3.7 H3.8 Z" fill={ORANGE_RED} />
    </svg>
  );
}

const SCAN: [string, string][] = [
  ["Symbol", "#00bfff"], ["M5", "#00bfff"], ["M15", "#00bfff"], ["M30", "#00bfff"], ["Summary", "#00bfff"],
  ["LLG", "#00bfff"], ["77", "#ef5350"], ["61", "#ef5350"], ["84", "#26a69a"], ["Sell", "#ef5350"],
];

export default function App() {
  return (
    <>
      <GlobalStyle />
      <Terminal>
        <Pane $height={533}>
          <Plot $first>
            <PriceChart />
            <CornerInfo />
            <PaneTitle as="h1">
              <svg width="7" height="4" viewBox="0 0 7 4" aria-hidden="true">
                <path d="M0,4 L3,0 H4 L7,4 Z" fill="#fff" />
              </svg>
              {"  LLG,H1  1919.29 1921.04 1917.20 1917.61"}
            </PaneTitle>

            <Scanner>
              <WindowTitle>
                <h2>TakePropips Donchian Trend Pro Scanner</h2>
                <Minimize type="button" aria-label="Minimize">-</Minimize>
              </WindowTitle>
              <WindowBody>
                <ScanGrid>
                  {SCAN.map(([t, bg]) => (
                    <Cell key={t} type="button" $bg={bg} $current={t === "LLG"}>{t}</Cell>
                  ))}
                </ScanGrid>
              </WindowBody>
            </Scanner>

            <Dashboard>
              <WindowTitle>
                <h2>TakePropips Dashboard</h2>
              </WindowTitle>
              <DashBody>
                <DashRow $size={14} $color={RED} $height={27}>
                  SELL:  1953.08
                  <svg width="12" height="14" viewBox="0 0 12 14" aria-hidden="true">
                    <path d="M6,0 V11 M1,6 L6,11 L11,6" fill="none" stroke={RED} strokeWidth="3" />
                  </svg>
                </DashRow>
                <DashRow>TP1: 1948.90 (77%)<Check /></DashRow>
                <DashRow>TP2: 1944.92 (59%)<Check /></DashRow>
                <DashRow>TP3: 1936.84 (41%)<Check /></DashRow>
                <DashRow $color={RED}>
                  SL:    1973.29
                  <svg width="10" height="8" viewBox="0 0 10 8" aria-label="missed">
                    <path d="M2,1 L8,7 M8,1 L2,7" stroke="#008000" strokeWidth="2" />
                  </svg>
                </DashRow>
                <Divider />
                <DashRow>Win/Loss: 17/5</DashRow>
                <DashRow $size={14} $color="#008000">Profit:  +153180</DashRow>
                <DashRow $size={14}>Success Rate:  77%</DashRow>
                <Rating>
                  <Stars aria-label="4 stars"><Star /><Star /><Star /><Star /></Stars>
                  (Sell)
                </Rating>
              </DashBody>
            </Dashboard>

            <TradePanel>
              <TradeTop>
                <SideButton type="button"><span>SELL</span></SideButton>
                <Volume>
                  <button type="button" aria-label="Decrease volume">
                    <svg width="5" height="3" viewBox="0 0 5 3"><path d="M0,0 H5 L3,3 H2 Z" /></svg>
                  </button>
                  <input aria-label="Volume" defaultValue="3.80" />
                  <button type="button" aria-label="Increase volume">
                    <svg width="5" height="3" viewBox="0 0 5 3"><path d="M0,3 H5 L3,0 H2 Z" /></svg>
                  </button>
                </Volume>
                <SideButton type="button"><span>BUY</span></SideButton>
              </TradeTop>
              <Quotes>
                <Quote><b>1917</b><span>61</span></Quote>
                <Quote><b>1918</b><span>11</span></Quote>
              </Quotes>
            </TradePanel>
            <Canvas pointerEvents="none">
              <Label x="3" y="84" $size={11} fill="#fff">ADR 3240  Today 1558</Label>
            </Canvas>

            <ScaleButton type="button">Scale</ScaleButton>
          </Plot>
          <Axis>
            <ScaleList>
              {AXIS_PRICES.map((p) => (
                <ScaleItem key={p}>{p}</ScaleItem>
              ))}
            </ScaleList>
            {TAGS.map(([t, y, bg]) => (
              <PriceTag key={t} $y={y} $bg={bg}>{t}</PriceTag>
            ))}
          </Axis>
        </Pane>

        <Pane $height={91}>
          <Plot>
            <SignalTable>
              <tbody>
                {SIGNALS.map(([name, cells]) => (
                  <tr key={name}>
                    <NameHead scope="row">{name}</NameHead>
                    {cells.map((c, i) => (
                      <React.Fragment key={i}>
                        <Frame>{FRAMES[i]}</Frame>
                        <Signal $buy={c[0] === "B"}>
                          <span>
                            <em>{c[0] === "B" ? "BUY" : "SELL"}</em>
                            <svg width="12" height="12" viewBox="-6 -6 12 12" aria-hidden="true">
                              <SignalArrow color={c[0] === "B" ? LIME : RED} turn={HEADING[c[1]]} />
                            </svg>
                          </span>
                        </Signal>
                      </React.Fragment>
                    ))}
                  </tr>
                ))}
              </tbody>
            </SignalTable>
            <Canvas aria-hidden="true" pointerEvents="none"><DayLines /></Canvas>
            <PaneTitle>Trade Assistant 1.14</PaneTitle>
          </Plot>
          <Axis $spread>
            <AxisValue>0</AxisValue>
            <AxisValue>0</AxisValue>
          </Axis>
        </Pane>

        <Pane $height={110}>
          <Plot>
            <Canvas role="img" aria-label="MACD">
              <DayLines />
              <g stroke="#fff" strokeDasharray="3 3" shapeRendering="crispEdges">
                {histogramBars.map(([x, h]) => (
                  <line key={x} x1={x + 0.5} x2={x + 0.5} y1={h > 0 ? 54 : 52} y2={h > 0 ? 53 - h : 54 - h} />
                ))}
              </g>
              <g fill="none" stroke="#fff">
                <polyline points={MACD_FAST} />
                <polyline points={MACD_SLOW} />
              </g>
              {[[143, 72], [407, 30], [679, 50], [799, 88], [887, 89], [999, 97]].map(([x, y]) => (
                <MacdArrow key={x} x={x} y={y} color={RED} />
              ))}
              {[[0, 42], [342, 21], [486, 10], [694, 49], [838, 85], [935, 86]].map(([x, y]) => (
                <MacdArrow key={x} x={x} y={y} color="#0000ff" turn={180} />
              ))}
            </Canvas>
            <PaneTitle>MACD(12,26,9) -0.1429 -0.3465 0.2036</PaneTitle>
          </Plot>
          <Axis $spread>
            <AxisValue>8.2895</AxisValue>
            <AxisValue>0.00</AxisValue>
            <AxisValue>-8.7762</AxisValue>
          </Axis>
        </Pane>

        <TimeAxis>
          {TIMES.map((t) => (
            <TimeItem key={t}>{t}</TimeItem>
          ))}
        </TimeAxis>

        <Watermark aria-hidden="true">
          <WikiMark x={572} y={167} />
          <WikiMark x={571} y={499} />
          <WikiMark x={878} y={267} />
          <WikiMark x={878} y={586} />
        </Watermark>
      </Terminal>
    </>
  );
}
